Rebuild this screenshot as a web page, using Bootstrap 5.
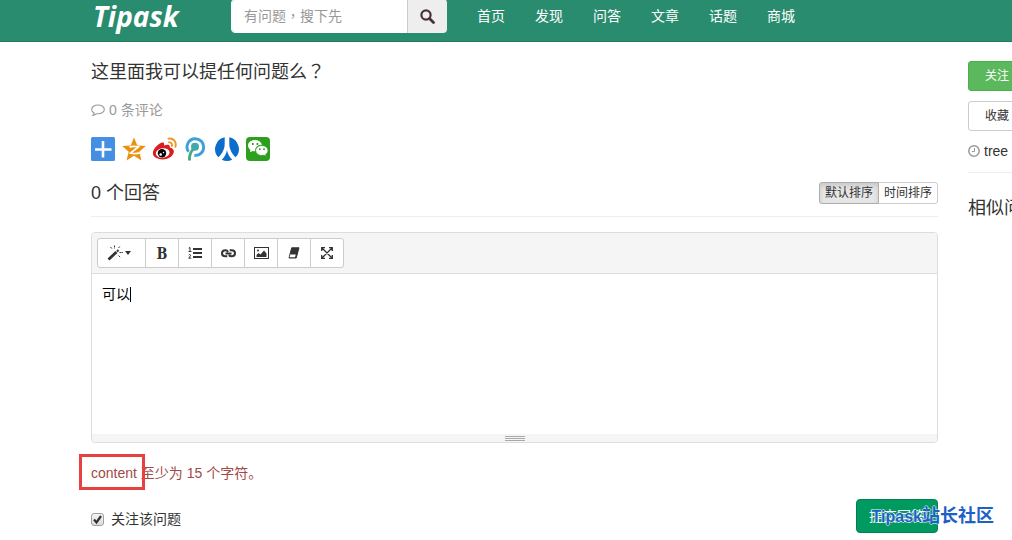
<!DOCTYPE html>
<html lang="zh-CN">
<head>
<meta charset="utf-8">
<meta name="viewport" content="width=device-width, initial-scale=1">
<title>这里面我可以提任何问题么？ - Tipask</title>
<link href="https://cdn.jsdelivr.net/npm/bootstrap@5.3.0/dist/css/bootstrap.min.css" rel="stylesheet">
<style>
  body { font: 14px/20px "Liberation Sans", "Noto Sans CJK SC", sans-serif; color: #333; overflow-x: hidden; }
  svg { display: block; flex: none; }
  .page-pad { padding-left: 91px; }
  .topbar { height: 42px; background: #2a8c6f; border-bottom: 1px solid #257a61; }
  .brand { width: 140px; padding-left: 2px; font: italic 700 28px/32px "Open Sans", "Noto Sans", sans-serif; color: #fff; text-decoration: none; }
  .search { width: 216px; margin-top: -1px; }
  .search .form-control { height: 34px; padding: 6px 12px; font-family: "Liberation Sans", "Noto Sans CJK TC", sans-serif; font-size: 14px; line-height: 20px; border-color: #fff; border-radius: 4px; }
  .search .form-control::placeholder { color: #999; }
  .search .btn { width: 40px; padding: 0 12px; background: #eee; border: 0; border-left: 1px solid #ccc; border-radius: 4px; }
  .topnav { margin-left: 15px; }
  .topnav .nav-link { padding: 6px 15px; color: #fff; }
  .main { min-width: 0; padding-top: 18px; }
  .side { width: 44px; margin-left: 30px; padding-top: 19px; overflow: hidden; white-space: nowrap; }
  h1, h2 { font-size: 18px; line-height: 20px; font-weight: 400; margin: 0; }
  .centred-mark { font-family: "Noto Sans CJK TC", sans-serif; }
  .comments { margin-top: 18px; color: #999; text-decoration: none; }
  .share { margin-top: 17px; gap: 7px; }
  .answers { margin-top: 21px; padding-bottom: 12px; border-bottom: 1px solid #eee; }
  .sort .btn { padding: 1px 5px; font-size: 12px; line-height: 18px; color: #333; border-color: #ccc; border-radius: 3px; }
  .sort .btn.active { background: #e6e6e6; border-color: #adadad; box-shadow: inset 0 3px 5px rgba(0,0,0,.125); }
  .editor { margin-top: 15px; border: 1px solid #ddd; border-radius: 4px; }
  .tools { padding: 5px; background: #f5f5f5; border-bottom: 1px solid #ddd; border-radius: 4px 4px 0 0; }
  .tools .btn { width: 34px; height: 30px; padding: 0; display: flex; align-items: center; justify-content: center; background: #fff; border-color: #ccc; border-radius: 3px; color: #333; }
  .tools .btn.wide { width: 49px; gap: 2px; padding-right: 6px; }
  .bold-mark { font: 700 16px/20px "Noto Serif", "DejaVu Serif", "Liberation Serif", serif; }
  .writing { height: 160px; padding: 10px; border: 0; border-radius: 0; color: #000; font-size: 14px; line-height: 20px; resize: none; }
  .caret { position: absolute; left: 38px; top: 13px; width: 1px; height: 15px; background: #000; }
  .grip { height: 8px; padding-top: 2px; background: #f5f5f5; border-radius: 0 0 4px 4px; }
  .grip span { display: block; width: 20px; height: 6px; margin: auto; background: repeating-linear-gradient(#a9a9a9 0 1px, #f5f5f5 1px 2px); }
  .problem { margin: 20px 0 0; color: #a04a48; }
  .ring { position: absolute; inset: -11px -8px -9px -12px; border: 3px solid #e84040; }
  .foot { margin-top: 16px; }
  .watch { padding-top: 6px; }
  .foot .form-check-input { width: 13px; height: 13px; margin: 0 7px 0 0; border: 1px solid #a0a0a0; border-radius: 3px; background: linear-gradient(#f4f4f4, #dcdcdc); }
  .foot .form-check-input:checked { background: url("data:image/svg+xml,%3Csvg xmlns='http://www.w3.org/2000/svg' viewBox='0 0 11 11'%3E%3Cpath d='M2 5.5l2.5 3L9 2' fill='none' stroke='%23333' stroke-width='2.2'/%3E%3C/svg%3E") center/11px, linear-gradient(#f4f4f4, #dcdcdc); }
  .foot .btn { height: 34px; padding: 6px 12px; font-size: 14px; line-height: 20px; color: #fff; background: #009a61; border-color: #00804f; border-radius: 4px; }
  .stamp { position: absolute; right: -56px; top: 5px; z-index: 2; font: 700 18px/24px "Liberation Sans", "Noto Sans CJK SC", sans-serif; color: #1e61c5; white-space: nowrap; text-shadow: 1px 0 #fff8, -1px 0 #fff8, 0 1px #fff8, 0 -1px #fff8; }
  .stamp span { font-size: 16px; }
  .side .btn { display: block; width: 120px; height: 30px; padding: 5px 16px; text-align: left; font-size: 12px; line-height: 18px; border-radius: 3px; margin-bottom: 10px; }
  .follow { color: #fff; background: #5cb85c; border-color: #4cae4c; }
  .keep { color: #333; background: #fff; border-color: #ccc; }
  .who { padding-bottom: 11px; border-bottom: 1px solid #eee; }
  .related { margin-top: 25px; }
</style>
</head>
<body>
<header class="topbar page-pad d-flex align-items-start">
  <a class="brand" href="#">Tipask</a>
  <form class="search input-group flex-nowrap">
    <input class="form-control" type="text" placeholder="有问题，搜下先" aria-label="搜索" lang="zh-TW">
    <button class="btn" type="button" aria-label="搜索"><svg width="15" height="15" viewBox="0 0 15 15" fill="none" stroke="#49323a"><circle cx="6" cy="6" r="4.6" stroke-width="2.2"/><path d="M9.5 9.5l4 4" stroke-width="2.8" stroke-linecap="round"/></svg></button>
  </form>
  <nav class="topnav nav flex-nowrap">
    <a class="nav-link" href="#">首页</a><a class="nav-link" href="#">发现</a><a class="nav-link" href="#">问答</a><a class="nav-link" href="#">文章</a><a class="nav-link" href="#">话题</a><a class="nav-link" href="#">商城</a>
  </nav>
</header>

<div class="page-pad d-flex">
  <main class="main flex-fill">
    <h1>这里面我可以提任何问题么<span class="centred-mark" lang="zh-TW">？</span></h1>
    <a class="comments d-flex align-items-center gap-1" href="#"><svg width="14" height="14" viewBox="0 0 14 14" fill="none" stroke="#999" stroke-width="1.1"><path d="M7 2C3.500 2 .7 3.900.7 6.400c0 1.500 1 2.800 2.500 3.600-.1 1-.6 1.800-1.300 2.500 1.500-.2 2.700-.8 3.600-1.800L7 10.800c3.500 0 6.300-1.900 6.300-4.400S10.500 2 7 2z"/></svg><span>0 条评论</span></a>
    <div class="share d-flex">
      <a href="#" aria-label="分享"><svg width="24" height="24" viewBox="0 0 24 24"><rect width="24" height="24" rx="1.500" fill="#448ee4"/><path d="M12 4v16.500M4 12.500h16.500" stroke="#fff" stroke-width="2.600"/></svg></a>
      <a href="#" aria-label="QQ空间"><svg width="24" height="24" viewBox="0 0 24 24"><path d="M12 .5l3.300 8 8.500.6-6.500 5.700 2.200 8.700L12 18.800l-7.500 4.700 2.200-8.700L.2 9.100l8.500-.6z" fill="#e99210"/><path d="M7.500 9.900c3-.7 6-.7 8.800 0L8.500 16c3.300.8 6 .8 9.300-.1" fill="none" stroke="#fff" stroke-width="1.700"/></svg></a>
      <a href="#" aria-label="新浪微博"><svg width="24" height="24" viewBox="0 0 24 24"><path d="M9 5.600c1.800-.5 2.500.7 2 2.800 3.300-1.300 6.300-1.100 5.800 2.100 3 .7 4.600 2.500 3.900 5-1 4-5.600 6.900-11 6.900C4.200 22.400-.2 19.800-.2 16.300-.2 12 5.600 6.500 9 5.600z" fill="#db1c20"/><ellipse cx="9.700" cy="16" rx="6.900" ry="4.700" fill="#fff" transform="rotate(-7 9.700 16)"/><circle cx="9" cy="16.300" r="4.200" fill="#050505"/><circle cx="7.700" cy="17.500" r="1.300" fill="#fff"/><circle cx="10.500" cy="15.500" r=".7" fill="#fff"/><path d="M15.400 1.600c4.700-1 8.500 3.200 7 8.200M16 5.400c2.200-.3 3.500 1.400 2.900 3.500" fill="none" stroke="#e99725" stroke-width="1.900" stroke-linecap="round"/></svg></a>
      <a href="#" aria-label="腾讯微博"><svg width="24" height="24" viewBox="0 0 24 24" fill="none"><path d="M4.500 14.800C.8 9 4.600 1.700 11 1.700c5 0 8.700 3.700 8.700 8.400 0 5.200-4.300 9-9.400 8.100" stroke="#3aa2d8" stroke-width="2.900"/><path d="M5.500 23.500c-.4-5.500 1-9 4.500-12" stroke="#48ab80" stroke-width="2.900"/><circle cx="11" cy="9.800" r="4" fill="#42a8ac"/></svg></a>
      <a href="#" aria-label="人人网"><svg width="24" height="24" viewBox="0 0 24 24" fill="#0b6dcc"><path d="M9.700.3v6.200c0 6-2.700 10.300-6.300 13.800A12 12 0 0 1 9.700.3zM14.300.3v6.200c0 6 2.700 10.300 6.300 13.800A12 12 0 0 0 14.300.3zM12 13.200c-.8 4-2.600 6.900-5.200 9.500a12 12 0 0 0 10.400 0c-2.600-2.600-4.400-5.500-5.200-9.500z"/></svg></a>
      <a href="#" aria-label="微信"><svg width="24" height="24" viewBox="0 0 24 24"><rect width="24" height="24" rx="4" fill="#2c9f1c"/><path d="M9 3C5 3 2 5.400 2 8.600c0 1.800 1 3.400 2.500 4.400L4 15.300l2.700-1.400c.9.200 1.700.3 2.600.3C8.800 10 12 7.600 16 7.700 15.200 5 12.400 3 9 3z" fill="#fff"/><path d="M15.800 8.500c-3.500 0-6.100 2.200-6.100 5s2.600 5 6.100 5c.8 0 1.500-.1 2.200-.3l2.300 1.200-.6-2c1.400-1 2.300-2.300 2.300-3.900 0-2.800-2.800-5-6.200-5z" fill="#fff" stroke="#2c9f1c" stroke-width=".8"/><g fill="#268b1a"><circle cx="6.800" cy="7" r="1"/><circle cx="11.400" cy="7" r="1"/><circle cx="13.800" cy="12.200" r=".9"/><circle cx="18" cy="12.200" r=".9"/></g></svg></a>
    </div>

    <div class="answers d-flex justify-content-between align-items-center">
      <h2>0 个回答</h2>
      <div class="sort btn-group"><button class="btn active" type="button">默认排序</button><button class="btn" type="button">时间排序</button></div>
    </div>

    <form>
      <div class="editor">
        <div class="tools">
          <div class="btn-group">
            <button class="btn wide" type="button" aria-label="样式"><svg width="16" height="16" viewBox="0 0 16 16" stroke="#333" fill="none"><path d="M1.500 14.500l8-7.500" stroke-width="2.800"/><path d="M10 6.500l1.500-1.400" stroke-width="2"/><path d="M7.500.5v3M3.500 2l1.700 2M11.500 3l1.700-2M12.500 7.500H16M11.500 10.500l2 2" stroke-width="1" stroke-dasharray="2 .6"/></svg><svg width="6" height="4" viewBox="0 0 6 4"><path d="M0 0h6L3 4z" fill="#333"/></svg></button>
            <button class="btn" type="button" aria-label="加粗"><span class="bold-mark">B</span></button>
            <button class="btn" type="button" aria-label="有序列表"><svg width="14" height="12" viewBox="0 0 14 12" fill="none" stroke="#333"><path d="M5 2h9M5 6h9M5 10h9" stroke-width="2"/><path d="M.7 1.200L2 .5v4M.5 4.500h3M.7 8c1-.9 2.300-.4 1.800.8L.7 11.200h2.600"/></svg></button>
            <button class="btn" type="button" aria-label="链接"><svg width="15" height="9" viewBox="0 0 15 9" fill="none" stroke="#333" stroke-width="2"><path d="M7 3C6.500 1.800 5.500 1.300 4.500 1.300 2.500 1.300 1 2.500 1 4.300s1.500 3 3.500 3h1.800M8 6c.5 1 1.500 1.300 2.500 1.300 2 0 3.500-1.200 3.500-3s-1.500-3-3.500-3H8.700M4.500 4.400h6"/></svg></button>
            <button class="btn" type="button" aria-label="图片"><svg width="15" height="12" viewBox="0 0 15 12"><rect x=".5" y=".5" width="14" height="11" fill="none" stroke="#333"/><path d="M2.500 10V8l2-2 2 1.500 3.500-4 2.500 3V10z" fill="#333"/><circle cx="4" cy="3.500" r="1" fill="#333"/></svg></button>
            <button class="btn" type="button" aria-label="清除格式"><svg width="12" height="12" viewBox="0 0 12 12"><path d="M3.700.8h7.300L8.200 11H1z" fill="#333" stroke="#333" stroke-linejoin="round"/><path d="M2.200 7.500h5.600l-.8 2.700H1.600z" fill="#fff"/></svg></button>
            <button class="btn" type="button" aria-label="全屏"><svg width="12" height="12" viewBox="0 0 12 12" fill="none" stroke="#333" stroke-width="1.300"><path d="M1 1l10 10M11 1L1 11M.7 4V.7H4M8 .7h3.300V4M.7 8v3.300H4M8 11.300h3.300V8"/></svg></button>
          </div>
        </div>
        <div class="position-relative">
          <textarea class="writing form-control" aria-label="回答内容">可以</textarea>
          <span class="caret"></span>
        </div>
        <div class="grip"><span></span></div>
      </div>
      <p class="problem"><span class="position-relative">content<span class="ring"></span></span> 至少为 15 个字符。</p>
      <div class="foot d-flex justify-content-between align-items-center">
        <div class="watch d-flex align-items-center"><input class="form-check-input" type="checkbox" id="watch" checked><label for="watch">关注该问题</label></div>
        <div class="position-relative"><button class="btn" type="button">提交回答</button><div class="stamp"><span>Tipask</span>站长社区</div></div>
      </div>
    </form>
  </main>
  <aside class="side flex-shrink-0">
    <button class="btn follow" type="button">关注</button>
    <button class="btn keep" type="button">收藏</button>
    <div class="who d-flex align-items-center gap-1"><svg width="12" height="12" viewBox="0 0 12 12" fill="none" stroke="#999"><circle cx="6" cy="6" r="5.200" stroke-width="1.500"/><path d="M6.500 3v3.500H3.800"/></svg><span>tree</span></div>
    <h2 class="related">相似问题</h2>
  </aside>
</div>
<script src="https://cdn.jsdelivr.net/npm/bootstrap@5.3.0/dist/js/bootstrap.bundle.min.js"></script>
</body>
</html>
